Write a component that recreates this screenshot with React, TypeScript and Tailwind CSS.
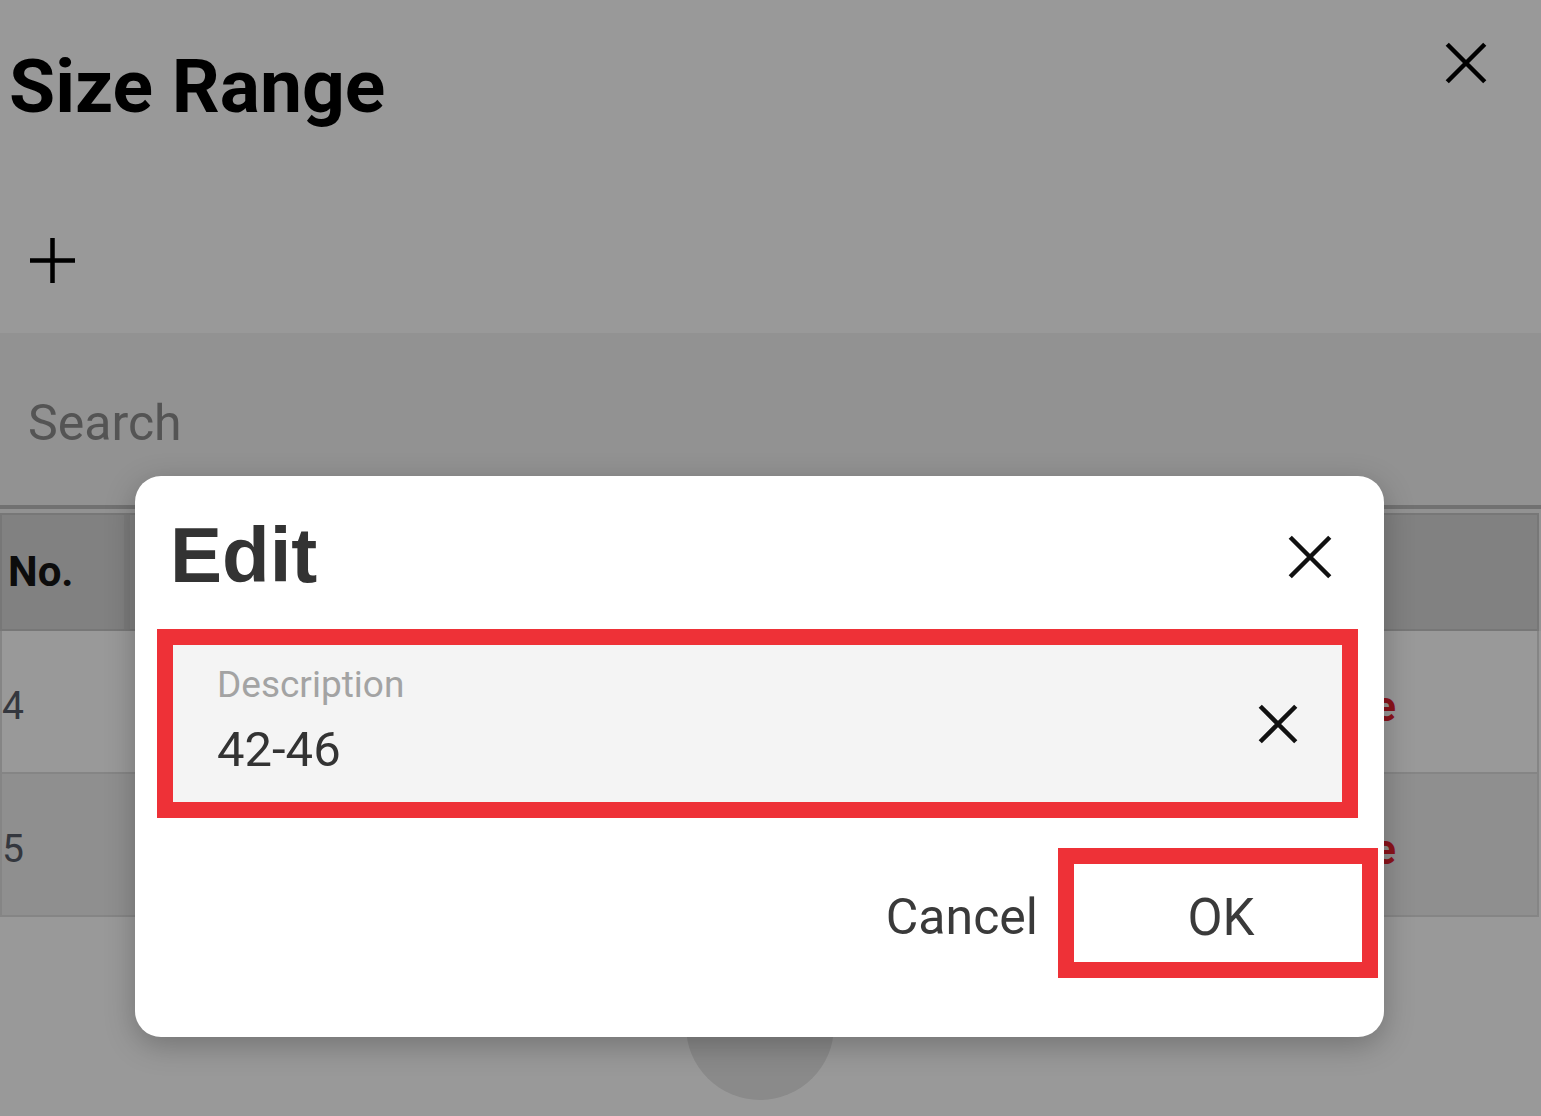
import React from 'react';

const Cross = ({ size, stroke }: { size: number; stroke: number }) => {
  const p = stroke / 2;
  return (
    <svg width={size} height={size} viewBox={`0 0 ${size} ${size}`} fill="none">
      <path
        d={`M${p} ${p}L${size - p} ${size - p}M${size - p} ${p}L${p} ${size - p}`}
        stroke="currentColor"
        strokeWidth={stroke}
      />
    </svg>
  );
};

const Plus = ({ size, stroke }: { size: number; stroke: number }) => (
  <svg width={size} height={size} viewBox={`0 0 ${size} ${size}`} fill="none">
    <path
      d={`M${size / 2} 0V${size}M0 ${size / 2}H${size}`}
      stroke="currentColor"
      strokeWidth={stroke}
    />
  </svg>
);

const rows = [
  { no: '4', bg: 'bg-white' },
  { no: '5', bg: 'bg-[#eeeeee]' },
];

export default function App() {
  return (
    <div className="relative w-full h-[1116px] overflow-hidden bg-white font-['Roboto',sans-serif]">
      {/* Size Range page underneath */}
      <div className="flex flex-col">
        <div className="h-[168px] flex justify-between items-start">
          <h1 className="pl-[9px] pt-[49px] text-[75px] leading-none font-bold text-black">
            Size Range
          </h1>
          <div className="mt-[42px] mr-[54px] text-black">
            <Cross size={42} stroke={4.5} />
          </div>
        </div>

        <div className="h-[165px]">
          <div className="ml-[30px] mt-[70px] text-black">
            <Plus size={45} stroke={4.5} />
          </div>
        </div>

        <div className="h-[172px] bg-[#f3f3f3] pl-[28px] pt-[65px]">
          <span className="text-[50px] leading-none text-[#8c8c8c]">Search</span>
        </div>

        <div className="h-[4px] bg-[#bdbdbd]" />

        <div className="pt-[4px] pr-[2px] bg-[#f3f3f3]">
          <div className="h-[118px] flex bg-[#d8d8d8] border-2 border-[#c6c6c6]">
            <div className="w-[128px] flex items-center pl-[6px] border-r-[6px] border-[#cdcdcd]">
              <span className="text-[42px] leading-none font-bold text-[#141414]">No.</span>
            </div>
            <div className="flex-1" />
          </div>
        </div>

        <div className="pr-[2px]">
          {rows.map((r) => (
            <div
              key={r.no}
              className={`h-[143px] flex items-center pt-[10px] border-x-2 border-b-2 border-[#dedede] ${r.bg}`}
            >
              <div className="w-[128px] self-stretch flex items-center">
                <span className="text-[39px] leading-none text-[#575d68]">{r.no}</span>
              </div>
              <div className="flex-1" />
              <div className="w-[400px] text-right pr-[141px]">
                <span className="text-[42px] leading-none font-bold text-[#e8202e]">Delete</span>
              </div>
            </div>
          ))}
        </div>

        <div className="flex justify-center pr-[22px] pt-[35px]">
          <div className="w-[148px] h-[148px] rounded-full bg-[#e6e6e6]" />
        </div>
      </div>

      {/* dimming overlay */}
      <div className="absolute inset-0 bg-black/40" />

      {/* Edit dialog */}
      <div className="absolute left-[135px] top-[476px] w-[1249px] h-[561px] rounded-[26px] bg-white shadow-[0_8px_30px_rgba(0,0,0,0.25)] flex flex-col">
        <div className="h-[153px] flex justify-between items-start">
          <h2 className="pl-[35px] pt-[40px] text-[78px] leading-none font-bold text-[#333333] font-['Liberation_Sans',Arial,sans-serif]">
            Edit
          </h2>
          <div className="mt-[59px] mr-[52px] text-[#111111]">
            <Cross size={44} stroke={4.5} />
          </div>
        </div>

        <div className="ml-[22px] w-[1201px] h-[189px] border-[16px] border-[#ee3137] bg-[#f4f4f4] flex items-center justify-between pl-[44px] pr-[44px]">
          <div className="self-stretch flex flex-col pt-[21px]">
            <span className="text-[37px] leading-none text-[#a3a3a3]">Description</span>
            <span className="mt-[22px] text-[49px] leading-none text-[#333333]">42-46</span>
          </div>
          <div className="text-[#111111]">
            <Cross size={40} stroke={4.5} />
          </div>
        </div>

        <div className="mt-[30px] mr-[6px] flex justify-end items-center gap-[20px]">
          <button className="pt-[8px] pl-[2px] text-[50px] leading-none text-[#3a3a3a]">Cancel</button>
          <button className="w-[320px] h-[130px] pt-[8px] pl-[6px] border-[16px] border-[#ee3137] bg-white flex items-center justify-center">
            <span className="text-[51px] leading-none text-[#3a3a3a]">OK</span>
          </button>
        </div>
      </div>
    </div>
  );
}
